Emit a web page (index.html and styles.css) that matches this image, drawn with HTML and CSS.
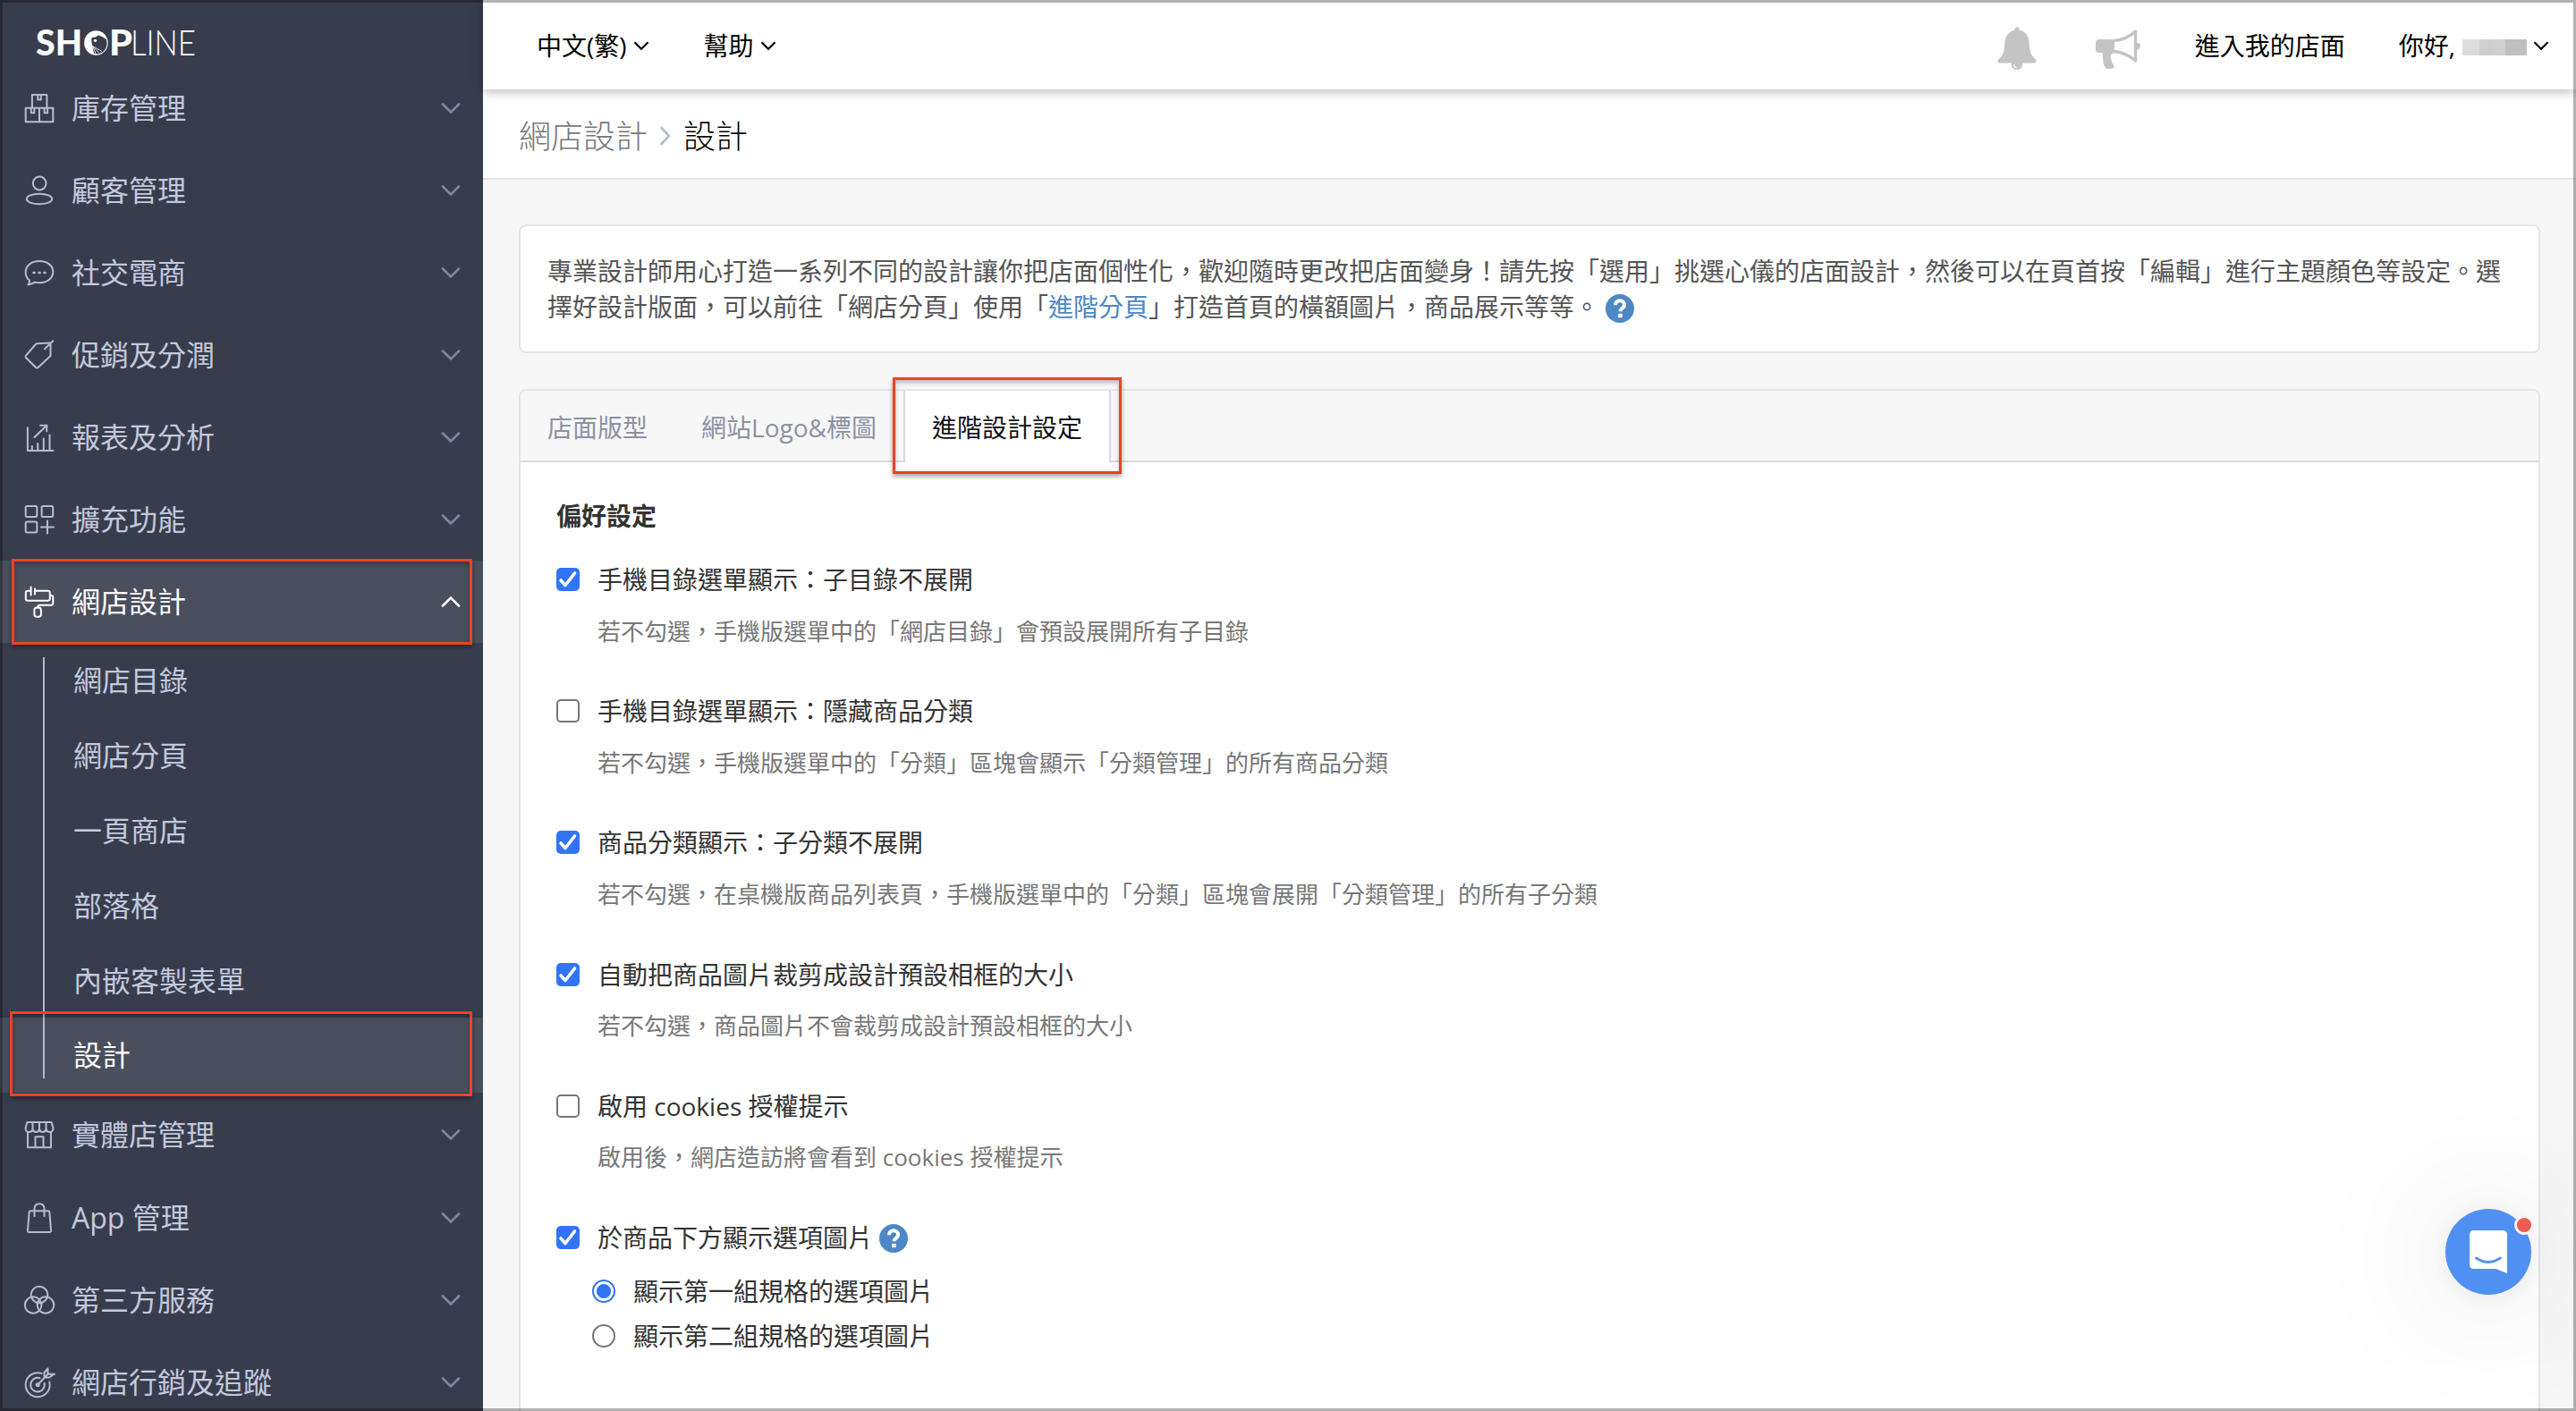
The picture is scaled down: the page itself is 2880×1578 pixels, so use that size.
FILE: index.html
```html
<!DOCTYPE html>
<html lang="zh-Hant">
<head>
<meta charset="utf-8">
<title>SHOPLINE 設計</title>
<link rel="stylesheet" href="styles.css">
</head>
<body>
<svg class="defs" width="0" height="0">
  <symbol id="down" viewBox="0 0 24 16"><path d="M3 3.5l9 9 9-9"/></symbol>
  <symbol id="up" viewBox="0 0 24 16"><path d="M3 12.5l9-9 9 9"/></symbol>
  <symbol id="help" viewBox="0 0 32 32"><circle cx="16" cy="16" r="16" fill="#4e87c5"/><path d="M11 12.2c0-3.2 2.2-5 5-5s5.2 1.8 5.2 4.6c0 3.9-4.7 3.9-4.7 7.4" fill="none" stroke="#fff" stroke-width="4"/><rect x="14.2" y="21.8" width="4.6" height="4.4" fill="#fff"/></symbol>
</svg>
<div class="app">
  <aside class="sidebar">
    <div class="brand">
      <svg class="logo" width="200" height="60" viewBox="0 -10 200 60">
        <text class="logo-bold" x="0" y="34" textLength="52" lengthAdjust="spacingAndGlyphs">SH</text>
        <ellipse cx="67.4" cy="20" rx="13.3" ry="13.700" fill="#fff"/>
        <path d="M62.500 14q4 .5 7.500-2.500 5 1 8.800 4.500 1.600 5-.3 9.500-2.300 5-7.500 6.500-3.500.8-6-.5-.8-4-2-9-1.200-5-.5-8.500z" fill="#383d4d"/>
        <circle cx="66.500" cy="17.300" r="1.600" fill="#fff"/>
        <path d="M63.500 23.500l10.500 6M63.500 23.500l7.500 8M63.500 23.500l3.500 8.500" stroke="#fff" stroke-width=".8"/>
        <text class="logo-bold" x="82" y="34" textLength="26" lengthAdjust="spacingAndGlyphs">P</text>
        <text class="logo-thin" x="106" y="34" textLength="73" lengthAdjust="spacingAndGlyphs">LINE</text>
      </svg>
    </div>
    <nav class="menu">
      <a class="item"><svg class="icon" viewBox="0 0 36 40"><path d="M9.900 19.500V5h16.500v14.500M2.700 19.800h30.600v15.500H2.700zM18 19.800v15.500M16.300 5v5.500M19.800 5v5.500h-3.500M8.800 19.800v5.500h3.500v-5.500M23.600 19.800v5.500h3.500v-5.500"/></svg><span>庫存管理</span><svg class="chev"><use href="#down"/></svg></a>
      <a class="item"><svg class="icon" viewBox="0 0 36 40"><ellipse cx="18.200" cy="12" rx="7.300" ry="7.500"/><ellipse cx="18" cy="29.500" rx="14.200" ry="5.800"/></svg><span>顧客管理</span><svg class="chev"><use href="#down"/></svg></a>
      <a class="item"><svg class="icon" viewBox="0 0 36 40"><path d="M7 28.500C4 26.500 2.700 23 2.700 19.500 2.700 12 9 7 18 7s15.300 5 15.300 12S27 31.200 18 31.200c-2 0-3.500-.2-5-.6-2.500 1.500-5 2.500-7.500 2.700C6.500 32 7 30.500 7 28.500z"/><path d="M11.500 20h1.200M17.500 20h1.200M23.400 20h1.200" stroke-width="2.400"/></svg><span>社交電商</span><svg class="chev"><use href="#down"/></svg></a>
      <a class="item"><svg class="icon" viewBox="0 0 36 40"><path d="M15.500 7.300L30.500 6.500v14.500L16.500 34q-1.200 1-2.400 0L3 23q-1-1.200 0-2.400L13.500 8.500q.8-1 2-1.200zM33.300 4.300L24 13.200"/></svg><span>促銷及分潤</span><svg class="chev"><use href="#down"/></svg></a>
      <a class="item"><svg class="icon" viewBox="0 0 36 40"><path d="M4.900 9.300v25.800h28.600M9.800 30v5M16.200 27v8M22.800 21.500v13.500M29.500 17.500V35M12.500 20L26.300 6.700M19 6.700h7.300v6.800"/></svg><span>報表及分析</span><svg class="chev"><use href="#down"/></svg></a>
      <a class="item"><svg class="icon" viewBox="0 0 36 40"><rect x="2.700" y="5" width="12.600" height="12" rx="1.500"/><rect x="20.600" y="5" width="12.600" height="12" rx="1.500"/><rect x="2.700" y="22.500" width="12.600" height="12" rx="1.500"/><path d="M20 28.500h14M27 21.500v14"/></svg><span>擴充功能</span><svg class="chev"><use href="#down"/></svg></a>
      <a class="item active"><svg class="icon" viewBox="0 0 36 40"><path d="M8.600 7.800H5q-2.200 0-2.200 2.200v6.500q0 2.200 2.200 2.200h22.500q2.300 0 2.300-2.200V10q0-2.200-2.300-2.200H13M8.600 3.500v9M13 5.500v6M29.800 13h1.500q2 0 2 2v6.500q0 2.300-2.300 2.300H18.500q-2.200 0-2.200 2.600"/><rect x="12.400" y="26.500" width="7.500" height="10.300" rx="2.800"/></svg><span>網店設計</span><svg class="chev"><use href="#up"/></svg></a>
      <div class="submenu">
        <a class="sub">網店目錄</a>
        <a class="sub">網店分頁</a>
        <a class="sub">一頁商店</a>
        <a class="sub">部落格</a>
        <a class="sub">內嵌客製表單</a>
        <a class="sub active">設計</a>
      </div>
      <a class="item"><svg class="icon" viewBox="0 0 36 40"><path d="M4.500 6h27l1.800 6q.5 5-3.800 5-3.500 0-4-3.500-.5 3.500-3.800 3.500-3.200 0-3.700-3.500-.5 3.500-3.700 3.500-3.300 0-3.800-3.500-.5 3.500-4 3.500-4.300 0-3.800-5zM10.500 6v7.500M18 6v7.500M25.500 6v7.500M5 17v17.300h26V17M13.500 34V22.200h9V34"/></svg><span>實體店管理</span><svg class="chev"><use href="#down"/></svg></a>
      <a class="item gap"><svg class="icon" viewBox="0 0 36 40"><path d="M8 12.300h20q1.200 0 1.400 1.500L31 34q.2 2-1.800 2H6.800q-2 0-1.800-2l1.600-20.200q.2-1.500 1.400-1.500zM12.500 18v-8q0-5.700 5.500-5.700t5.500 5.700v8"/></svg><span>App 管理</span><svg class="chev"><use href="#down"/></svg></a>
      <a class="item"><svg class="icon" viewBox="0 0 36 40"><circle cx="18" cy="14" r="9.300"/><circle cx="11.100" cy="25.500" r="9.300"/><circle cx="25" cy="25.500" r="9.300"/></svg><span>第三方服務</span><svg class="chev"><use href="#down"/></svg></a>
      <a class="item"><svg class="icon" viewBox="0 0 36 40"><path d="M20.500 9.900A13.500 13.500 0 1 0 29.300 19.500M18.500 15.300A7.800 7.800 0 1 0 23.600 21M16.300 22.500l11.300-11.800M27.500 4.500v6.200H35M27.500 4.500l-4 4.500v5.500h5.500l5.500-3.800"/><circle cx="16.200" cy="22.700" r="1.500"/></svg><span>網店行銷及追蹤</span><svg class="chev"><use href="#down"/></svg></a>
    </nav>
    <div class="mark mark-menu"></div>
    <div class="mark mark-sub"></div>
  </aside>
  <main class="main">
    <header class="topbar">
      <span class="drop lang">中文(繁)<svg><use href="#down"/></svg></span>
      <span class="drop">幫助<svg><use href="#down"/></svg></span>
      <span class="spacer"></span>
      <svg class="bell" width="46" height="50" viewBox="0 0 46 50"><path d="M20.500 4.500Q20.500 1 23 1t2.500 3.500Q36 7 36.500 18c.5 12 2.500 15 6.500 18.500 2.500 2.200 2 5-1.500 5H4.500c-3.500 0-4-2.800-1.500-5C7 33 9 30 9.500 18 10 7 20.500 4.500 20.500 4.500z"/><path d="M16.500 41h13q0 8-6.500 8t-6.500-8z"/><path d="M19.500 43q.3 3 3 4" fill="none" stroke="#fff" stroke-width="1.300"/></svg>
      <svg class="horn" width="52" height="46" viewBox="0 0 52 46"><path d="M5 12h17v15.500h-1.500c-3 1-3 3-2.500 5.500.5 3 1 5 3 7.500 2 3-1 4.500-5 4.500-4.500 0-6-3-6.500-7.500L8.500 27H5q-4 0-4-4v-7q0-4 4-4z"/><path d="M22 13.500Q36 12 45.500 3v33Q36 27 22 25.500" fill="none" stroke="#c4c4c4" stroke-width="3.400" stroke-linejoin="round"/><path d="M47 15.500q4 1 4 4t-4 4z"/></svg>
      <span class="store">進入我的店面</span>
      <span class="drop user">你好,<i class="mask"><b></b><b></b><b></b><b></b></i><svg><use href="#down"/></svg></span>
    </header>
    <div class="crumbs"><span class="parent">網店設計</span><svg width="14" height="22" viewBox="0 0 14 22"><path d="M2.500 2l8.500 9-8.500 9"/></svg><span>設計</span></div>
    <section class="content">
      <div class="notice">專業設計師用心打造一系列不同的設計讓你把店面個性化，歡迎隨時更改把店面變身！請先按「選用」挑選心儀的店面設計，然後可以在頁首按「編輯」進行主題顏色等設定。選<br>擇好設計版面，可以前往「網店分頁」使用「<a>進階分頁</a>」打造首頁的橫額圖片，商品展示等等。<svg class="help"><use href="#help"/></svg></div>
      <div class="panel">
        <div class="tabs">
          <a class="tab">店面版型</a>
          <a class="tab">網站Logo&amp;標圖</a>
          <a class="tab current">進階設計設定<span class="mark mark-tab"></span></a>
        </div>
        <div class="form">
          <h2>偏好設定</h2>
          <div class="option"><i class="box on"><svg viewBox="0 0 26 26"><path d="M5 14l5 5.500L20.500 6"/></svg></i><div><p class="label">手機目錄選單顯示：子目錄不展開</p><p class="hint">若不勾選，手機版選單中的「網店目錄」會預設展開所有子目錄</p></div></div>
          <div class="option"><i class="box"></i><div><p class="label">手機目錄選單顯示：隱藏商品分類</p><p class="hint">若不勾選，手機版選單中的「分類」區塊會顯示「分類管理」的所有商品分類</p></div></div>
          <div class="option"><i class="box on"><svg viewBox="0 0 26 26"><path d="M5 14l5 5.500L20.500 6"/></svg></i><div><p class="label">商品分類顯示：子分類不展開</p><p class="hint">若不勾選，在桌機版商品列表頁，手機版選單中的「分類」區塊會展開「分類管理」的所有子分類</p></div></div>
          <div class="option"><i class="box on"><svg viewBox="0 0 26 26"><path d="M5 14l5 5.500L20.500 6"/></svg></i><div><p class="label">自動把商品圖片裁剪成設計預設相框的大小</p><p class="hint">若不勾選，商品圖片不會裁剪成設計預設相框的大小</p></div></div>
          <div class="option"><i class="box"></i><div><p class="label">啟用 cookies 授權提示</p><p class="hint">啟用後，網店造訪將會看到 cookies 授權提示</p></div></div>
          <div class="option last"><i class="box on"><svg viewBox="0 0 26 26"><path d="M5 14l5 5.500L20.500 6"/></svg></i><p class="label">於商品下方顯示選項圖片<svg class="help"><use href="#help"/></svg></p></div>
          <div class="choice"><i class="radio on"></i>顯示第一組規格的選項圖片</div>
          <div class="choice"><i class="radio"></i>顯示第二組規格的選項圖片</div>
        </div>
      </div>
    </section>
  </main>
</div>
<div class="chat"><svg width="96" height="96" viewBox="0 0 96 96"><path d="M32 24h32q5 0 5 5v43l-12.500-5H32q-5 0-5-5V29q0-5 5-5z" fill="#fff"/><path d="M34.500 55q13.500 9 27 0" fill="none" stroke="#5090f3" stroke-width="2.800" stroke-linecap="round"/></svg><span class="dot"></span></div>
<div class="frame"></div>
</body>
</html>
```
FILE: styles.css
```css
* { box-sizing: border-box; }
body {
  margin: 0;
  width: 2880px;
  height: 1578px;
  overflow: hidden;
  position: relative;
  background: #f7f7f7;
  font-family: "Open Sans", "Noto Sans CJK TC", sans-serif;
  font-size: 28px;
  line-height: 40px;
  color: #333;
}
h2, p { margin: 0; }
i { font-style: normal; }
.defs { position: absolute; }
.app { display: flex; height: 1578px; overflow: hidden; }

/* Sidebar */
.sidebar { position: relative; width: 540px; flex: none; background: #383d4d; }
.brand { height: 75px; padding: 18px 0 0 40px; }
.logo { display: block; overflow: visible; }
.logo-bold, .logo-thin { font-family: Lato, sans-serif; font-size: 39px; fill: #fff; }
.logo-bold { font-weight: 900; }
.logo-thin { font-weight: 300; }
.item {
  display: flex;
  align-items: center;
  height: 92px;
  padding: 0 24px 0 26px;
  font-size: 32px;
  color: #c3c9dd;
}
.item span { flex: 1; margin-left: 18px; }
.item.gap { margin-top: 1px; }
.icon { width: 36px; height: 40px; fill: none; stroke: #b9bdcb; stroke-width: 2; stroke-linecap: round; stroke-linejoin: round; }
.chev { width: 24px; height: 16px; fill: none; stroke: #8187a0; stroke-width: 2.6; stroke-linecap: round; }
.item.active, .sub.active { background: #4a4f5d; color: #fff; }
.active .icon, .active .chev { stroke: #fff; }
.submenu { position: relative; margin-top: -1px; }
.submenu::before { content: ""; position: absolute; left: 48px; top: 17px; bottom: 16px; width: 2px; background: #b4b9c8; }
.sub { display: flex; align-items: center; height: 84px; padding: 2px 0 0 82px; font-size: 32px; color: #c3c9dd; }
.sub.active { padding-top: 0; }
.submenu + .item { margin-top: 1px; }

/* Highlight rectangles laid over the page */
.mark { position: absolute; border: 3px solid #ec4226; box-shadow: 0 3px 5px rgba(0,0,0,.35), inset 0 3px 5px rgba(0,0,0,.25); }
.mark-menu { left: 13px; top: 625px; width: 515px; height: 96px; }
.mark-sub { left: 11px; top: 1131px; width: 517px; height: 95px; }
.mark-tab { left: -14px; top: -15px; width: 256px; height: 108px; }

/* Top bar */
.main { flex: 1; display: flex; flex-direction: column; min-width: 0; }
.topbar {
  position: relative;
  z-index: 1;
  flex: none;
  display: flex;
  align-items: center;
  height: 100px;
  padding: 2px 29px 0 60px;
  background: #fff;
  color: #000;
  box-shadow: 0 2px 12px rgba(0,0,0,.3);
}
.drop { display: flex; align-items: center; }
.drop svg { width: 20px; height: 14px; margin-left: 6px; fill: none; stroke: #000; stroke-width: 2.6; }
.lang { margin-right: 60px; }
.spacer { flex: 1; }
.bell, .horn { fill: #c4c4c4; }
.bell { margin: 6px 64px 0 0; }
.horn { margin: 8px 60px 0 0; }
.store { margin-right: 60px; }
.mask { display: flex; margin: 3px 0 0 8px; height: 18px; }
.mask b { width: 19px; background: #dcdcdc; }
.mask b + b { background: #cfcfcf; width: 15px; }
.mask b + b + b { background: #d0d0d0; width: 14px; }
.mask b + b + b + b { background: #bfbfbf; width: 24px; }
.crumbs {
  flex: none;
  display: flex;
  align-items: center;
  height: 101px;
  padding: 6px 0 0 40px;
  background: #fff;
  border-bottom: 2px solid #e5e5e5;
  font-size: 36px;
  color: #000;
  font-weight: 300;
}
.crumbs .parent { color: #777; font-weight: 300; }
.crumbs svg { margin: 0 13px 2px; fill: none; stroke: #b4bacb; stroke-width: 2.6; stroke-linecap: round; }

/* Content */
.content { padding: 50px 40px 0; }
.notice { height: 144px; padding: 30px 30px; border: 2px solid #e5e5e5; border-radius: 8px; background: #fff; color: #555; white-space: nowrap; }
.notice a { color: #4e87c5; }
.help { width: 32px; height: 32px; vertical-align: -7px; }
.notice .help { margin-left: 7px; }
.panel { margin-top: 40px; height: 1200px; border: 2px solid #e5e5e5; border-radius: 8px; background: #fff; }
.tabs { display: flex; height: 80px; background: #f7f7f7; border-bottom: 2px solid #d9d9d9; border-radius: 6px 6px 0 0; color: #8c91a2; }
.tab { height: 80px; line-height: 82px; padding: 0 30px; white-space: nowrap; }
.tab + .tab { padding-right: 0; }
.tab.current { position: relative; margin-left: 30px; padding: 0 30px; background: #fff; color: #111118; border: solid #d9d9d9; border-width: 0 2px; }
.form { padding: 40px 40px 0; }
h2 { font-size: 28px; font-weight: 700; line-height: 40px; }
.option { display: flex; height: 147.200px; }
h2 + .option { margin-top: 31px; }
.box { flex: none; width: 26px; height: 26px; margin: 7px 20px 0 0; border: 2px solid #767676; border-radius: 5px; background: #fff; }
.box.on { border: 0; background: #3174f6; }
.box svg { display: block; fill: none; stroke: #fff; stroke-width: 3.600; stroke-linecap: round; stroke-linejoin: round; }
.hint { margin-top: 17.500px; font-size: 26px; color: #777; }
.option.last { height: 55px; }
.option .help { margin-left: 7px; vertical-align: -6px; }
.choice { display: flex; align-items: center; height: 50px; padding-left: 40px; }
.radio { width: 26px; height: 26px; margin-right: 20px; border: 2px solid #767676; border-radius: 50%; background: #fff; }
.radio.on { border-color: #3174f6; background: radial-gradient(circle, #3174f6 7.500px, #fff 8.500px); }

/* Chat launcher */
.chat { position: absolute; left: 2734px; top: 1352px; width: 96px; height: 96px; border-radius: 50%; background: #5090f3; box-shadow: 0 2px 24px rgba(0,0,0,.06), 0 4px 160px 10px rgba(0,0,0,.12); }
.chat svg { display: block; }
.dot { position: absolute; left: 77px; top: 7px; width: 22px; height: 22px; border: 3px solid #f4f4f4; border-radius: 50%; background: #ec5b54; }

.frame { position: absolute; z-index: 2; inset: 0; border: 3px solid rgba(0,0,0,.3); }
```
